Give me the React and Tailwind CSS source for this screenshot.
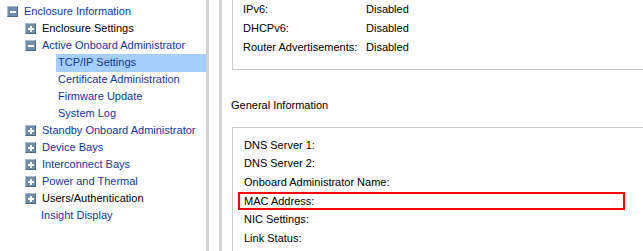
const navItems = [
	{ label: "Enclosure Information", level: 0, icon: "minus", tone: "link" },
	{ label: "Enclosure Settings", level: 1, icon: "plus", tone: "plain" },
	{ label: "Active Onboard Administrator", level: 1, icon: "minus", tone: "link" },
	{ label: "TCP/IP Settings", level: 2, tone: "link", active: true },
	{ label: "Certificate Administration", level: 2, tone: "link" },
	{ label: "Firmware Update", level: 2, tone: "link" },
	{ label: "System Log", level: 2, tone: "link" },
	{ label: "Standby Onboard Administrator", level: 1, icon: "plus", tone: "link" },
	{ label: "Device Bays", level: 1, icon: "plus", tone: "link" },
	{ label: "Interconnect Bays", level: 1, icon: "plus", tone: "link" },
	{ label: "Power and Thermal", level: 1, icon: "plus", tone: "link" },
	{ label: "Users/Authentication", level: 1, icon: "plus", tone: "plain" },
	{ label: "Insight Display", level: 1, tone: "link" },
];

const ipv6Rows = [
	["IPv6:", "Disabled"],
	["DHCPv6:", "Disabled"],
	["Router Advertisements:", "Disabled"],
];

const generalRows = [
	"DNS Server 1:",
	"DNS Server 2:",
	"Onboard Administrator Name:",
	"MAC Address:",
	"NIC Settings:",
	"Link Status:",
];

const ToggleIcon = ({ type }) => (
	<span className="w-[11px] h-[11px] shrink-0 flex items-center justify-center bg-[#6f8ca8] border border-t-[#a7bccf] border-l-[#a7bccf] border-b-[#4c6a86] border-r-[#4c6a86]">
		{type === "minus" ? (
			<span className="w-[6px] h-[2px] bg-white" />
		) : (
			<span className="relative w-[6px] h-[6px]">
				<span className="absolute left-0 top-[2px] w-[6px] h-[2px] bg-white" />
				<span className="absolute left-[2px] top-0 w-[2px] h-[6px] bg-white" />
			</span>
		)}
	</span>
);

const NavRow = ({ item }) => {
	const pad =
		item.level === 0 ? "pl-[7px]" : item.level === 1 ? "pl-[25px]" : "pl-[56px]";
	const color = item.tone === "link" ? "text-[#13379c]" : "text-black";

	return (
		<div className={`h-[17px] flex items-center ${pad}`}>
			{item.icon ? (
				<div className="flex items-center gap-[6px]">
					<ToggleIcon type={item.icon} />
					<span className={color}>{item.label}</span>
				</div>
			) : item.level === 2 ? (
				<span
					className={`flex-1 h-[18px] flex items-center pl-[2px] ${color} ${
						item.active ? "bg-[#a4cefb]" : ""
					}`}
				>
					{item.label}
				</span>
			) : (
				<span className={`pl-[16px] ${color}`}>{item.label}</span>
			)}
		</div>
	);
};

const App = () => {
	return (
		<div
			className="w-[643px] h-[251px] flex bg-white overflow-hidden text-[11px] leading-none"
			style={{ fontFamily: '"Liberation Sans", Arial, sans-serif' }}
		>
			<nav className="w-[206px] shrink-0 pt-[3px] flex flex-col">
				{navItems.map((item) => (
					<NavRow key={item.label} item={item} />
				))}
			</nav>
			<div className="w-[3px] shrink-0 bg-[#d3d3d3]" />
			<div className="w-[10px] shrink-0" />
			<div className="w-[3px] shrink-0 bg-[#d3d3d3]" />

			<main className="flex-1 pl-[10px] flex flex-col text-black">
				<section className="border-l border-b border-[#cbcbcb] pl-[10px] pb-[12px] flex flex-col">
					{ipv6Rows.map(([label, value]) => (
						<div key={label} className="h-[19px] flex items-center">
							<span className="w-[123px]">{label}</span>
							<span>{value}</span>
						</div>
					))}
				</section>

				<h2 className="h-[57px] flex items-center -ml-[1px] pt-[13px]">
					General Information
				</h2>

				<section className="flex-1 border-l border-t border-[#cbcbcb] pl-[5px] pr-[18px] pt-[8px] flex flex-col">
					{generalRows.map((label) => (
						<div
							key={label}
							className={`h-[18.6px] shrink-0 flex items-center pl-[4px] border-2 ${
								label === "MAC Address:" ? "border-[#ff0000]" : "border-transparent"
							}`}
						>
							{label}
						</div>
					))}
				</section>
			</main>
		</div>
	);
};

export default App;
